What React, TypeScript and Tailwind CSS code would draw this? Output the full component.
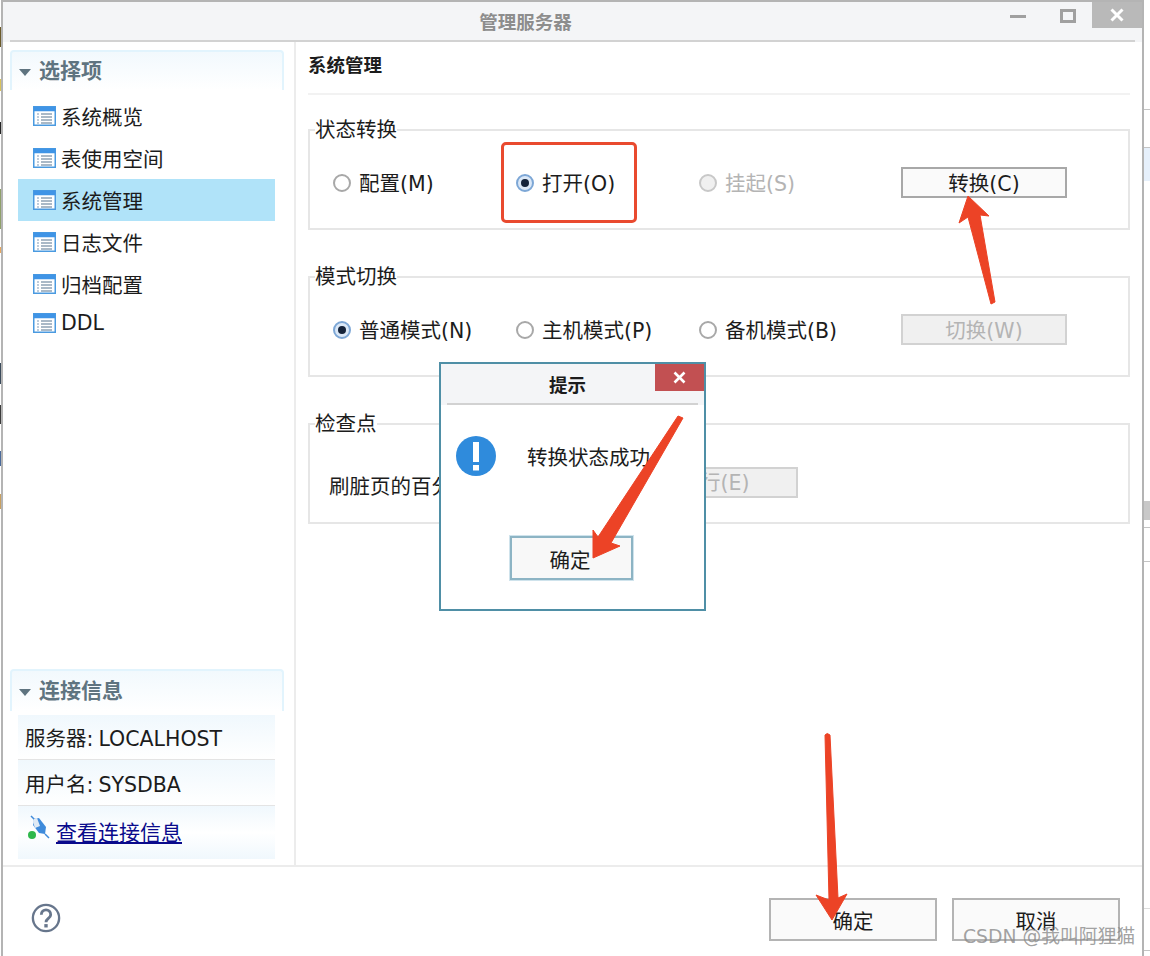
const FONT = "font-['DejaVu_Sans','Noto_Sans_CJK_SC',sans-serif]";

const TableIcon = () => (
  <svg width="23" height="20" viewBox="0 0 23 20" className="shrink-0">
    <rect x="0.75" y="0.75" width="21.5" height="18.5" fill="#fff" stroke="#4a9ae0" strokeWidth="1.5" />
    <rect x="0.75" y="0.75" width="21.5" height="4.5" fill="#3f94e6" />
    <path d="M4 8h2M4 11h2M4 14h2M4 17h2" stroke="#a9bccf" strokeWidth="1.4" />
    <path d="M8 8h11M8 11h11M8 14h11M8 17h11" stroke="#8fa3b5" strokeWidth="1.4" />
  </svg>
);

const Caret = () => (
  <svg width="12" height="7" viewBox="0 0 12 7" className="shrink-0">
    <path d="M0 0h12L6 7z" fill="#5f7480" />
  </svg>
);

const Radio = ({ checked, disabled }: { checked?: boolean; disabled?: boolean }) => (
  <span
    className={`flex h-[18px] w-[18px] shrink-0 items-center justify-center rounded-full border-2 ${
      checked ? "border-[#7da7d6] bg-[#dbe8f7]" : disabled ? "border-[#c8c8c8] bg-[#f0f0f0]" : "border-[#a8a8a8] bg-white"
    }`}
  >
    {checked && <span className="h-[8px] w-[8px] rounded-full bg-[#14233a]" />}
  </span>
);

const RadioItem = ({
  label,
  checked,
  disabled,
  className,
}: {
  label: string;
  checked?: boolean;
  disabled?: boolean;
  className: string;
}) => (
  <div className={`flex items-center gap-[8px] ${className}`}>
    <Radio checked={checked} disabled={disabled} />
    <span className={`pt-[2px] ${disabled ? "text-[#b4b4b4]" : "text-[#1c1c1c]"}`}>{label}</span>
  </div>
);

const GroupBox = ({ title, className, children }: { title: string; className: string; children: React.ReactNode }) => (
  <fieldset className={`h-[112px] border-2 border-[#e6e6e6] px-[5px] ${className}`}>
    <legend className="h-[24px] px-0 text-[20.5px] leading-[24px] text-[#1c1c1c]">{title}</legend>
    {children}
  </fieldset>
);

const sideItems = ["系统概览", "表使用空间", "系统管理", "日志文件", "归档配置"];

// bits of the desktop that show either side of the window
const leftBits = [
  { id: 1, gap: 27, h: 20, color: "bg-[#6b5a2a]" },
  { id: 2, gap: 32, h: 12, color: "bg-[#d9c25a]" },
  { id: 3, gap: 31, h: 12, color: "bg-[#222222]" },
  { id: 4, gap: 55, h: 40, color: "bg-[#8fa06a]" },
  { id: 5, gap: 18, h: 6, color: "bg-[#e8a860]" },
  { id: 6, gap: 110, h: 21, color: "bg-[#3a4a5a]" },
  { id: 7, gap: 21, h: 19, color: "bg-[#3a3a3a]" },
  { id: 8, gap: 27, h: 15, color: "bg-[#4a6a9a]" },
  { id: 9, gap: 28, h: 15, color: "bg-[#c8a060]" },
];

const rightBits = [
  { id: 1, gap: 109, h: 1, color: "bg-[#c4c4c4]" },
  { id: 2, gap: 37, h: 1, color: "bg-[#c4c4c4]" },
  { id: 3, gap: 0, h: 33, color: "bg-[#e6f0fb]" },
  { id: 4, gap: 320, h: 19, color: "bg-[#c8c8c8]" },
  { id: 5, gap: 7, h: 1, color: "bg-[#c4c4c4]" },
  { id: 6, gap: 33, h: 1, color: "bg-[#c4c4c4]" },
  { id: 7, gap: 346, h: 1, color: "bg-[#dddddd]" },
  { id: 8, gap: 41, h: 1, color: "bg-[#c4c4c4]" },
];

export default function App() {
  return (
    <div className={`relative flex h-[956px] w-[1150px] overflow-hidden bg-white text-[20.5px] text-[#1c1c1c] ${FONT}`}>
      <div className="w-[1px] shrink-0">
        {leftBits.map((b) => (
          <div key={b.id} className={b.color} style={{ marginTop: b.gap, height: b.h }} />
        ))}
      </div>

      {/* window */}
      <div className="flex h-[956px] w-[1143px] shrink-0 flex-col border-x-2 border-t-2 border-[#b4b4b4]">
        {/* title bar */}
        <div className="relative flex h-[40px] shrink-0 flex-col bg-[#f4f5f7]">
          <div className="flex flex-1 items-center justify-center pr-[94px] pt-[3px] text-[18.5px] font-bold text-[#8d8d8d]">
            管理服务器
          </div>
          <div className="mx-[7px] h-[2px] bg-[#d2d2d2]" />
          <div className="absolute right-0 top-0 flex h-[26px] items-start">
            <span className="mr-[34px] mt-[13px] h-[3px] w-[16px] bg-[#a0a0a0]" />
            <span className="mr-[16px] mt-[7px] h-[14px] w-[16px] border-[3px] border-[#a0a0a0]" />
            <span className="flex h-[26px] w-[50px] items-center justify-center bg-[#b9b9b9]">
              <svg width="14" height="14" viewBox="0 0 14 14">
                <path d="M1.5 1.5l11 11M12.5 1.5l-11 11" stroke="#fff" strokeWidth="3" />
              </svg>
            </span>
          </div>
        </div>

        <div className="flex h-[825px] shrink-0 border-b-2 border-[#ececec]">
          {/* sidebar */}
          <aside className="flex h-full w-[293px] shrink-0 flex-col justify-between border-r-2 border-[#ececec] pb-[6px] pl-[7px] pr-[10px] pt-[8px]">
            <div>
              <div className="flex h-[40px] items-center gap-[8px] rounded-t-[4px] border-x-2 border-t-2 border-[#e2f4fd] bg-gradient-to-b from-[#f2f9fd] to-white pl-[7px] pt-[2px] text-[21px] font-bold text-[#5f7480]">
                <Caret />
                <span>选择项</span>
              </div>
              <div className="mt-[5px] flex flex-col pl-[8px] pr-[9px]">
                {sideItems.map((item) => (
                  <div
                    key={item}
                    className={`flex h-[42px] items-center gap-[5px] pl-[15px] ${
                      item === "系统管理" ? "bg-[#b0e3f9]" : ""
                    }`}
                  >
                    <TableIcon />
                    <span className="mt-[5px]">{item}</span>
                  </div>
                ))}
                <div className="flex h-[36px] items-center gap-[5px] pl-[15px]">
                  <TableIcon />
                  <span>DDL</span>
                </div>
              </div>
            </div>
            <div>
              <div className="flex h-[42px] items-center gap-[8px] rounded-t-[4px] border-x-2 border-t-2 border-[#e2f4fd] bg-gradient-to-b from-[#f2f9fd] to-white pl-[7px] pt-[2px] text-[21px] font-bold text-[#5f7480]">
                <Caret />
                <span>连接信息</span>
              </div>
              <div className="mt-[4px] flex flex-col pl-[8px] pr-[9px]">
                <div className="flex h-[44px] items-center bg-gradient-to-b from-[#f0f8fd] to-white pl-[7px] pt-[4px]">
                  服务器:<span className="ml-[5px]">LOCALHOST</span>
                </div>
                <div className="flex h-[46px] items-center border-t border-[#e4e4e4] bg-gradient-to-b from-[#f0f8fd] to-white pl-[7px] pt-[5px]">
                  用户名:<span className="ml-[5px]">SYSDBA</span>
                </div>
                <div className="flex h-[54px] items-start gap-[6px] border-t border-[#e4e4e4] bg-gradient-to-b from-[#f0f8fd] via-white to-[#f0f8fd] pl-[8px] pt-[9px]">
                  <svg width="24" height="26" viewBox="0 0 24 26" className="shrink-0">
                    <path d="M5 1l4 4M19 19l4 4" stroke="#3f8bdb" strokeWidth="1.5" />
                    <path d="M8 4l5-1 7 9-1 7-6-1-6-8z" fill="#3f8bdb" />
                    <path d="M8 4l3-1 3 8-5 2-2-6z" fill="#dfeaf5" />
                    <circle cx="6" cy="20" r="4" fill="#2fb84c" />
                  </svg>
                  <a className="mt-[3px] text-[21px] text-[#0a0a8c] underline underline-offset-2">查看连接信息</a>
                </div>
              </div>
            </div>
          </aside>

          {/* content */}
          <main className="min-w-0 flex-1 pl-[12px] pr-[12px]">
            <div className="h-[53px] border-b-2 border-[#f2f2f2] pt-[9px] text-[18.5px] font-bold leading-[30px]">系统管理</div>
            <GroupBox title="状态转换" className="mt-[23px]">
              <div className="flex h-[86px] items-start pt-[25px]">
                <RadioItem label="配置(M)" className="w-[201px] pl-[18px]" />
                <RadioItem label="打开(O)" checked className="w-[183px]" />
                <RadioItem label="挂起(S)" disabled className="w-[202px]" />
                <div className="flex h-[31px] w-[166px] items-center justify-center border-2 border-[#a8a8a8] bg-[#fafafa] pt-[3px]">
                  转换(C)
                </div>
              </div>
            </GroupBox>
            <GroupBox title="模式切换" className="mt-[35px]">
              <div className="flex h-[86px] items-start pt-[25px]">
                <RadioItem label="普通模式(N)" checked className="w-[201px] pl-[18px]" />
                <RadioItem label="主机模式(P)" className="w-[183px]" />
                <RadioItem label="备机模式(B)" className="w-[202px]" />
                <div className="flex h-[31px] w-[166px] items-center justify-center border-2 border-[#d2d2d2] bg-[#f0f0f0] pt-[3px] text-[#b4b4b4]">
                  切换(W)
                </div>
              </div>
            </GroupBox>
            <GroupBox title="检查点" className="mt-[35px]">
              <div className="flex h-[86px] items-start pt-[31px]">
                <span className="mt-[5px] pl-[14px]">刷脏页的百分比</span>
                <div className="ml-[159px] flex h-[31px] w-[166px] items-center justify-center border-2 border-[#d2d2d2] bg-[#f0f0f0] pt-[2px] text-[#b4b4b4]">
                  执行(E)
                </div>
              </div>
            </GroupBox>
          </main>
        </div>

        {/* footer */}
        <div className="flex flex-1 items-start justify-between pl-[28px] pr-[22px] pt-[31px]">
          <svg width="30" height="30" viewBox="0 0 32 32" className="mt-[5px]">
            <circle cx="16" cy="16" r="14" fill="#fff" stroke="#67768c" strokeWidth="2.5" />
            <path d="M11 12.5c0-7 10-7 10 0 0 4-5 4-5 8" fill="none" stroke="#67768c" strokeWidth="3" />
            <rect x="14.2" y="22.5" width="3.6" height="3.6" fill="#67768c" />
          </svg>
          <div className="flex gap-[15px]">
            <div className="flex h-[43px] w-[168px] items-center justify-center border-2 border-[#b4b4b4] bg-[#fafafa] pt-[5px]">
              确定
            </div>
            <div className="flex h-[43px] w-[168px] items-center justify-center border-2 border-[#b4b4b4] bg-[#fafafa] pt-[5px]">
              取消
            </div>
          </div>
        </div>
      </div>

      <div className="w-[6px] shrink-0">
        {rightBits.map((b) => (
          <div key={b.id} className={b.color} style={{ marginTop: b.gap, height: b.h }} />
        ))}
      </div>

      {/* message dialog */}
      <div className="absolute left-[439px] top-[362px] flex h-[249px] w-[267px] flex-col border-2 border-[#4f8fa6] bg-white">
        <div className="h-[41px] shrink-0 bg-[#f4f5f7] px-[6px]">
          <div className="flex h-[41px] items-center justify-center border-b-2 border-[#d2d2d2] pr-[10px] pt-[5px] text-[18.5px] font-bold">
            提示
          </div>
        </div>
        <div className="absolute right-0 top-0 flex h-[27px] w-[49px] items-center justify-center bg-[#c25052]">
          <svg width="13" height="13" viewBox="0 0 13 13">
            <path d="M1.5 1.5l10 10M11.5 1.5l-10 10" stroke="#fff" strokeWidth="2.6" />
          </svg>
        </div>
        <div className="flex h-[101px] shrink-0 items-start pl-[15px] pt-[31px]">
          <svg width="40" height="40" viewBox="0 0 40 40" className="shrink-0">
            <circle cx="20" cy="20" r="20" fill="#2f8bdc" />
            <rect x="17" y="6" width="6" height="20" fill="#fff" />
            <rect x="17" y="29" width="6" height="5.5" fill="#fff" />
          </svg>
          <span className="ml-[31px] mt-[7px] whitespace-nowrap">转换状态成功</span>
        </div>
        <div className="flex justify-center pr-[3px] pt-[30px]">
          <div className="flex h-[44px] w-[123px] items-center justify-center border-2 border-[#8db4c4] bg-[#f8f8f8] pr-[2px] pt-[6px] shadow-[0_0_0_1px_#cfe3ec]">
            确定
          </div>
        </div>
      </div>

      {/* red annotations */}
      <div className="absolute left-[501px] top-[142px] h-[81px] w-[136px] rounded-[5px] border-[3px] border-[#e94a2f]" />
      <svg width="1150" height="956" viewBox="0 0 1150 956" className="absolute left-0 top-0">
        <g fill="#ec4326" stroke="#ec4326" strokeWidth="1" strokeLinejoin="round">
          <path d="M968 196L989 216L980 215L995 302L991 304L968 217L959 223z" />
          <path d="M678 416L683 418L611 543L620 546L593 558L593 530L598 537z" />
          <path d="M825 735Q827 732 830 735L838 898L847 894L832 920L816 895L829 900z" />
        </g>
      </svg>

      {/* watermark */}
      <span className="absolute left-[963px] top-[925px] text-[18.8px] leading-[24px] text-[#8a8a8a]/80">
        CSDN @我叫阿狸猫
      </span>
    </div>
  );
}
